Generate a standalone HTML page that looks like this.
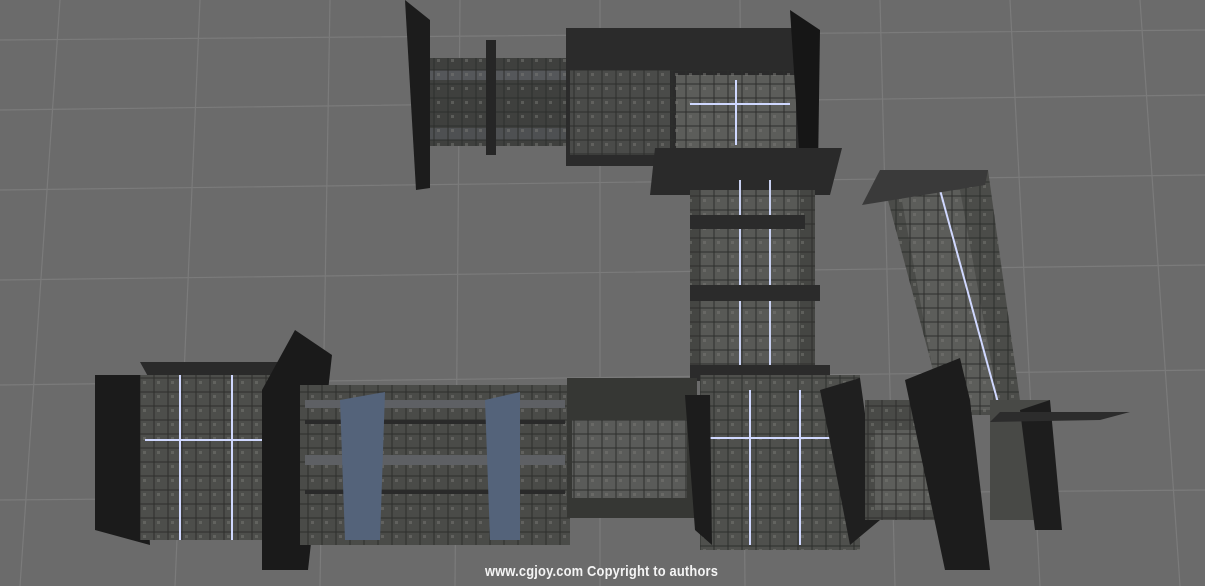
<!DOCTYPE html>
<html><head><meta charset="utf-8"><style>
html,body{margin:0;padding:0;width:1205px;height:586px;overflow:hidden;background:#6b6b6b}
svg{position:absolute;left:0;top:0}
.wm{position:absolute;left:485px;top:563px;font:bold 15px "Liberation Sans",sans-serif;color:#f4f4f4;letter-spacing:0.2px;transform:scaleX(0.86);transform-origin:left}
</style></head><body>
<svg width="1205" height="586" viewBox="0 0 1205 586">
<defs>
<pattern id="t" width="14" height="14" patternUnits="userSpaceOnUse">
<rect width="14" height="14" fill="none" stroke="#2e2f2d" stroke-width="1"/>
<rect x="3" y="3" width="3" height="3" fill="#777874" opacity="0.5"/>
</pattern>
</defs>
<g stroke="#7b7b7b" stroke-width="1.2" fill="none">
<path d="M0 40 L1205 30 M0 110 L1205 95 M0 190 L1205 175 M0 280 L1205 265 M0 385 L1205 370 M0 500 L1205 490"/>
<path d="M60 0 L20 586 M200 0 L175 586 M330 0 L320 586 M460 0 L455 586 M600 0 L600 586 M740 0 L745 586 M880 0 L895 586 M1010 0 L1040 586 M1140 0 L1180 586"/>
</g>
<rect x="418" y="58" width="152" height="88" fill="#3f403e"/>
<rect x="420" y="70" width="148" height="10" fill="#55575a"/>
<rect x="420" y="128" width="148" height="12" fill="#4e5052"/>
<rect x="418" y="58" width="152" height="88" fill="url(#t)"/>
<polygon points="405,0 430,20 430,188 416,190" fill="#1c1c1c"/>
<rect x="486" y="40" width="10" height="115" fill="#262626"/>
<rect x="566" y="28" width="245" height="138" fill="#2b2b2b"/>
<rect x="570" y="70" width="100" height="85" fill="#4a4b49"/>
<rect x="676" y="75" width="120" height="75" fill="#5c5d5a"/>
<rect x="570" y="70" width="226" height="85" fill="url(#t)"/>
<line x1="690" y1="104" x2="790" y2="104" stroke="#cfd8ff" stroke-width="2"/>
<line x1="736" y1="80" x2="736" y2="145" stroke="#cfd8ff" stroke-width="2"/>
<polygon points="790,10 820,30 818,170 800,165" fill="#161616"/>
<polygon points="655,148 842,148 830,195 650,195" fill="#2a2a2a"/>
<rect x="690" y="190" width="125" height="190" fill="#454643"/>
<rect x="700" y="190" width="100" height="190" fill="#585956"/>
<rect x="690" y="190" width="125" height="190" fill="url(#t)"/>
<line x1="740" y1="180" x2="740" y2="380" stroke="#c8d0f0" stroke-width="2"/>
<line x1="770" y1="180" x2="770" y2="380" stroke="#c8d0f0" stroke-width="2"/>
<rect x="690" y="215" width="115" height="14" fill="#2b2b2b"/>
<rect x="690" y="285" width="130" height="16" fill="#2b2b2b"/>
<rect x="690" y="365" width="140" height="16" fill="#2b2b2b"/>
<polygon points="880,170 988,170 1022,415 945,415" fill="#4b4c49"/>
<polygon points="900,190 960,190 1000,410 940,410" fill="#5c5d5a"/>
<polygon points="880,170 988,170 1022,415 945,415" fill="url(#t)"/>
<line x1="940" y1="190" x2="1000" y2="410" stroke="#d0d8ff" stroke-width="2"/>
<polygon points="880,170 988,170 985,185 862,205" fill="#3a3a3a"/>
<polygon points="95,375 140,375 150,545 95,530" fill="#1b1b1b"/>
<polygon points="140,362 290,362 275,380 150,380" fill="#2a2a2a"/>
<rect x="140" y="375" width="145" height="165" fill="#4d4e4b"/>
<rect x="140" y="375" width="145" height="165" fill="url(#t)"/>
<line x1="145" y1="440" x2="280" y2="440" stroke="#d0d8ff" stroke-width="2"/>
<line x1="180" y1="375" x2="180" y2="540" stroke="#d0d8ff" stroke-width="2"/>
<line x1="232" y1="375" x2="232" y2="540" stroke="#d0d8ff" stroke-width="2"/>
<polygon points="262,390 295,330 332,355 308,570 262,570" fill="#1a1a1a"/>
<rect x="300" y="385" width="270" height="160" fill="#4a4b48"/>
<rect x="300" y="385" width="270" height="160" fill="url(#t)"/>
<rect x="305" y="400" width="260" height="8" fill="#5e6064"/>
<rect x="305" y="420" width="260" height="4" fill="#2a2a2a"/>
<rect x="305" y="455" width="260" height="10" fill="#5e6064"/>
<rect x="305" y="490" width="260" height="4" fill="#2a2a2a"/>
<polygon points="340,400 385,392 380,540 345,540" fill="#54637a"/>
<polygon points="485,400 520,392 520,540 490,540" fill="#54637a"/>
<rect x="567" y="378" width="130" height="140" fill="#363734"/>
<rect x="572" y="420" width="115" height="78" fill="#5a5b59"/>
<rect x="572" y="420" width="115" height="78" fill="url(#t)"/>
<rect x="700" y="375" width="160" height="175" fill="#4f504d"/>
<rect x="700" y="375" width="160" height="175" fill="url(#t)"/>
<line x1="705" y1="438" x2="850" y2="438" stroke="#d0d8ff" stroke-width="2"/>
<line x1="750" y1="390" x2="750" y2="545" stroke="#d0d8ff" stroke-width="2"/>
<line x1="800" y1="390" x2="800" y2="545" stroke="#d0d8ff" stroke-width="2"/>
<polygon points="685,395 710,395 712,545 695,530" fill="#1c1c1c"/>
<polygon points="820,390 860,378 880,520 850,545" fill="#1f1f1f"/>
<rect x="865" y="400" width="80" height="120" fill="#494a47"/>
<rect x="875" y="430" width="60" height="80" fill="#5d5e5b"/>
<rect x="865" y="400" width="80" height="120" fill="url(#t)"/>
<polygon points="905,380 960,358 970,400 990,570 945,570" fill="#1c1c1c"/>
<rect x="990" y="400" width="60" height="120" fill="#484946"/>
<polygon points="1020,410 1050,400 1062,530 1035,530" fill="#1d1d1d"/>
<polygon points="1000,412 1130,412 1100,420 990,422" fill="#2c2c2c"/>
</svg>
<div class="wm">www.cgjoy.com Copyright to authors</div>
</body></html>
